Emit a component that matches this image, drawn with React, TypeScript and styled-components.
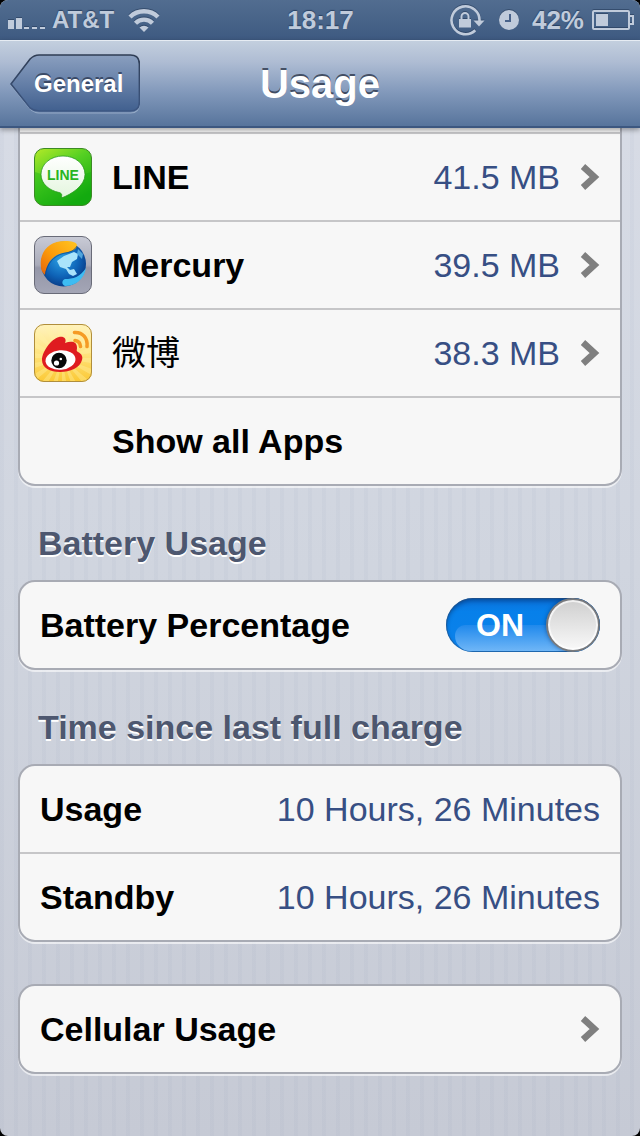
import React, { useState } from "react";
import styled, { createGlobalStyle } from "styled-components";

const GlobalStyle = createGlobalStyle`
  *, *::before, *::after { box-sizing: border-box; }
  body {
    margin: 0;
    background: #000;
    font-family: "Liberation Sans", "Noto Sans CJK SC", sans-serif;
  }
`;

const Screen = styled.div`
  display: flex;
  flex-direction: column;
  min-height: 100vh;
  border-radius: 8px;
  overflow: hidden;
  background:
    repeating-linear-gradient(90deg, rgba(90, 110, 150, 0.04) 0 4px, transparent 4px 14px),
    linear-gradient(#d9dde7, #d0d5df 50%, #c6cad5);
`;

const StatusBar = styled.header`
  display: grid;
  grid-template-columns: 1fr auto 1fr;
  align-items: center;
  height: 40px;
  padding: 0 6px 0 7px;
  background: linear-gradient(#526d90, #3e5a81);
  color: #c0cbdb;
  font-size: 26px;
  line-height: 40px;
  font-weight: bold;
  text-shadow: 0 -1px 1px rgba(20, 40, 70, 0.6);
`;

const StatusSide = styled.div<{ $end?: boolean }>`
  display: flex;
  align-items: center;
  justify-content: ${(p) => (p.$end ? "flex-end" : "flex-start")};
`;

const Percent = styled.span`
  margin: 0 8px 0 13px;
`;

const Carrier = styled.span`
  margin: 0 14px 0 7px;
  font-size: 24px;
`;

const StatusIcon = styled.svg`
  display: block;
  flex: none;
  fill: #c0cbdb;
  filter: drop-shadow(0 -1px 0 rgba(30, 50, 80, 0.5));
`;

const LockIcon = styled(StatusIcon)`
  margin-right: 14px;
`;

const NavBar = styled.nav`
  position: relative;
  display: grid;
  grid-template-columns: 1fr auto 1fr;
  align-items: center;
  height: 88px;
  padding: 0 10px;
  border-top: 1px solid #e6ecf3;
  border-bottom: 2px solid #3c5780;
  background: linear-gradient(#c3cfde, #aebcd3 25%, #8299bb 60%, #57749c);
  box-shadow: 0 2px 5px rgba(0, 0, 0, 0.35);
`;

const BackButton = styled.button`
  position: relative;
  justify-self: start;
  height: 60px;
  padding: 0 17px 0 24px;
  border: 0;
  background: none;
  color: #fff;
  font: bold 24px/56px "Liberation Sans", sans-serif;
  text-shadow: 0 -2px 0 rgba(45, 58, 84, 0.8);
  cursor: pointer;
`;

const BackShape = styled.svg`
  position: absolute;
  inset: 0;
  width: 100%;
  height: 100%;
`;

const BackLabel = styled.span`
  position: relative;
`;

const Title = styled.h1`
  margin: 0;
  color: #fff;
  font-size: 40px;
  line-height: 84px;
  text-shadow: 0 -2px 0 rgba(52, 62, 82, 0.85);
`;

const Content = styled.main`
  padding: 0 18px 62px;
`;

const Group = styled.ul<{ $cut?: boolean; $gap?: boolean }>`
  margin: ${(p) => (p.$gap ? "42px" : "0")} 0 0;
  padding: ${(p) => (p.$cut ? "4px" : "0")} 0 0;
  list-style: none;
  overflow: hidden;
  border: 2px solid #a8abb4;
  border-top-width: ${(p) => (p.$cut ? "0" : "2px")};
  border-radius: ${(p) => (p.$cut ? "0 0 17px 17px" : "17px")};
  background: #f7f7f7;
  box-shadow: 0 2px 0 rgba(255, 255, 255, 0.6);
`;

const Row = styled.li<{ $ruled?: boolean }>`
  border-top: ${(p) => (p.$ruled ? "2px solid #c6c6c8" : "0")};
`;

const rowLayout = `
  display: flex;
  align-items: center;
  height: 86px;
  padding: 0 20px;
  color: #000;
  font-size: 34px;
  line-height: 40px;
  text-decoration: none;
`;

const RowLine = styled.div`
  ${rowLayout}
`;

const RowLabel = styled.label`
  ${rowLayout}
  cursor: pointer;
`;

const RowLink = styled.a<{ $app?: boolean }>`
  ${rowLayout}
  padding-left: ${(p) => (p.$app ? "14px" : "20px")};
`;

const IconSlot = styled.span`
  flex: none;
  width: 78px;
  height: 58px;
`;

const Name = styled.span`
  flex: 1;
  font-weight: bold;
`;

const HanName = styled.span`
  flex: 1;
  font-weight: 400;
`;

const Value = styled.span`
  color: #374f84;
`;

const Chevron = styled.svg`
  display: block;
  flex: none;
  margin-left: 20px;
`;

const SectionTitle = styled.h2`
  margin: 0;
  padding: 37px 20px 17px;
  color: #4d576f;
  font-size: 34px;
  line-height: 40px;
  text-shadow: 0 2px 0 #fff;
`;

const Toggle = styled.span<{ $on: boolean }>`
  position: relative;
  display: flex;
  align-items: center;
  justify-content: ${(p) => (p.$on ? "flex-start" : "flex-end")};
  width: 154px;
  height: 54px;
  padding: 0 ${(p) => (p.$on ? "30px" : "22px")};
  overflow: hidden;
  border-radius: 27px;
  background: ${(p) => (p.$on ? "linear-gradient(#0a6fd8, #0780ea 25%, #0c82ea)" : "#eee")};
  box-shadow: inset 0 0 0 1px rgba(50, 80, 120, 0.5), inset 0 3px 4px rgba(0, 30, 80, 0.45);
  color: ${(p) => (p.$on ? "#fff" : "#7f7f7f")};
  font-size: 32px;
  font-weight: bold;

  &::before {
    content: "";
    position: absolute;
    left: 9px;
    right: 9px;
    bottom: 1px;
    height: 26px;
    border-radius: 18px 18px 26px 26px;
    background: ${(p) => (p.$on ? "linear-gradient(#2089ec, #6fb6f7)" : "#fafafa")};
  }
`;

const ToggleText = styled.span`
  position: relative;
`;

const Knob = styled.span<{ $on: boolean }>`
  position: absolute;
  top: 0;
  ${(p) => (p.$on ? "right: 0;" : "left: 0;")}
  width: 54px;
  height: 54px;
  border: 2px solid #77797d;
  border-radius: 50%;
  background: linear-gradient(#cfcfcf, #f9f9f9);
  box-shadow: inset 0 0 0 2px rgba(255, 255, 255, 0.7), 0 0 4px rgba(0, 30, 80, 0.5);
`;

const HiddenCheckbox = styled.input`
  position: absolute;
  inset: 0;
  width: 100%;
  height: 100%;
  margin: 0;
  opacity: 0;
  cursor: pointer;
`;

const SignalIcon = () => (
  <StatusIcon width="38" height="30" viewBox="0 0 38 30" aria-hidden="true">
    <path d="M1 15h6v9H1zM9 13h6v11H9zM17 22h5v2h-5zM25 22h5v2h-5zM33 22h5v2h-5z" />
  </StatusIcon>
);

const WifiIcon = () => (
  <StatusIcon width="32" height="26" viewBox="0 0 32 26" aria-hidden="true">
    <path d="M16 25l-4.500-4.500a6.400 6.400 0 0 1 9 0z" />
    <g fill="none" stroke="#c0cbdb" strokeWidth="4.400">
      <path d="M7.500 16.200a12 12 0 0 1 17 0" />
      <path d="M2 10a20 20 0 0 1 28 0" />
    </g>
  </StatusIcon>
);

const RotationLockIcon = () => (
  <LockIcon width="36" height="32" viewBox="0 0 36 32" aria-hidden="true">
    <path d="M26.300 26.300A14 14 0 1 1 30.500 17" fill="none" stroke="#c0cbdb" strokeWidth="2.600" />
    <path d="M24.500 16.500h11l-5.500 6z" />
    <path d="M10 15h12v8.500H10z" />
    <path d="M12.500 15v-2.500a3.500 3.500 0 0 1 7 0V15" fill="none" stroke="#c0cbdb" strokeWidth="2" />
  </LockIcon>
);

const ClockIcon = () => (
  <StatusIcon width="20" height="20" viewBox="0 0 20 20" aria-hidden="true">
    <circle cx="10" cy="10" r="10" />
    <path d="M11 4v7H6" fill="none" stroke="#48628a" strokeWidth="2" />
  </StatusIcon>
);

const BatteryIcon = () => (
  <StatusIcon width="42" height="22" viewBox="0 0 42 22" aria-hidden="true">
    <rect x="1" y="2" width="36" height="18" rx="1" fill="none" stroke="#c0cbdb" strokeWidth="2" />
    <path d="M4 5h12v12H4z" />
    <path d="M38 7h3v8h-3" fill="none" stroke="#c0cbdb" strokeWidth="2" />
  </StatusIcon>
);

const ChevronIcon = () => (
  <Chevron width="20" height="28" viewBox="0 0 20 28" aria-hidden="true">
    <path d="M3 3.500L14.500 14L3 24.500" fill="none" stroke="#7f7f7f" strokeWidth="6.500" />
  </Chevron>
);

const LineIcon = () => (
  <svg width="58" height="58" viewBox="0 0 58 58" aria-hidden="true">
    <defs>
      <linearGradient id="lineBg" x1="0" y1="0" x2="0.600" y2="1">
        <stop offset="0" stopColor="#b5ea28" />
        <stop offset="0.450" stopColor="#55d023" />
        <stop offset="1" stopColor="#16a80e" />
      </linearGradient>
      <linearGradient id="lineBubble" x1="0" y1="0" x2="0" y2="1">
        <stop offset="0" stopColor="#fff" />
        <stop offset="1" stopColor="#e3f5dd" />
      </linearGradient>
    </defs>
    <rect x="0.500" y="0.500" width="57" height="57" rx="9.500" fill="url(#lineBg)" stroke="#3c8a25" />
    <path d="M1 24Q29 34 57 24V48a9 9 0 0 1-9 9H10a9 9 0 0 1-9-9z" fill="#0db010" opacity="0.350" />
    <path d="M29 8C16.500 8 7 16 7 26.500C7 36 15.500 42.500 25 44.500C28 45.300 28 46.500 27.400 50C37 46.500 51 38 51 26.500C51 16 41.500 8 29 8z" fill="url(#lineBubble)" stroke="#24991a" strokeWidth="0.800" />
    <text x="29" y="32" textAnchor="middle" fontFamily="Liberation Sans, sans-serif" fontWeight="bold" fontSize="14" fill="#28b522">LINE</text>
  </svg>
);

const MercuryIcon = () => (
  <svg width="58" height="58" viewBox="0 0 58 58" aria-hidden="true">
    <defs>
      <linearGradient id="mercBg" x1="0" y1="0" x2="0" y2="1">
        <stop offset="0" stopColor="#c9cbd6" />
        <stop offset="0.500" stopColor="#a9abb9" />
        <stop offset="0.550" stopColor="#9597a8" />
        <stop offset="1" stopColor="#a4a6b6" />
      </linearGradient>
      <radialGradient id="mercGlobe" cx="0.450" cy="0.400" r="0.650">
        <stop offset="0" stopColor="#2ba0e4" />
        <stop offset="0.600" stopColor="#0e62b6" />
        <stop offset="1" stopColor="#07357f" />
      </radialGradient>
      <linearGradient id="mercSwoosh" x1="1" y1="0" x2="0" y2="1">
        <stop offset="0" stopColor="#ffc522" />
        <stop offset="0.550" stopColor="#fb9a0a" />
        <stop offset="1" stopColor="#e5640b" />
      </linearGradient>
    </defs>
    <rect x="0.500" y="0.500" width="57" height="57" rx="9.500" fill="url(#mercBg)" stroke="#696b78" />
    <circle cx="29.500" cy="28" r="22.500" fill="url(#mercGlobe)" />
    <path d="M23 25L30 20L40 16L44 18L43 23L38 26L36 31L33 31L36 34L40 33L43 38L39 40L35 38L32 33L26 31z" fill="#a9e3fb" />
    <path d="M44 13l5 5-1 5-5-5z" fill="#4fa4dc" />
    <path d="M31 43C39 43 46 41 52 32C50 43 42 50 31 50C27 48 28 44 31 43z" fill="#3ebcf2" />
    <path d="M7 31C5 16 15 5 31 5C38 5 42 6 43 9C43 14 37 16 29 17C19 19 13 26 11 39C8 36 7 34 7 31z" fill="url(#mercSwoosh)" />
    <path d="M11 39.500C13 27 20 20 29 17.500Q40 16 43 10" fill="none" stroke="#093d81" strokeWidth="1" opacity="0.600" />
  </svg>
);

const rays = Array.from({ length: 18 }, (_, i) => {
  const a = (i * Math.PI) / 9;
  const b = a + Math.PI / 18;
  return `M28 34L${28 + 60 * Math.cos(a)} ${34 + 60 * Math.sin(a)}L${28 + 60 * Math.cos(b)} ${34 + 60 * Math.sin(b)}z`;
}).join("");

const WeiboIcon = () => (
  <svg width="58" height="58" viewBox="0 0 58 58" aria-hidden="true">
    <defs>
      <linearGradient id="weiboBg" x1="0" y1="0" x2="0" y2="1">
        <stop offset="0" stopColor="#fff3c0" />
        <stop offset="0.500" stopColor="#ffe480" />
        <stop offset="1" stopColor="#fbc833" />
      </linearGradient>
      <clipPath id="weiboClip">
        <rect width="58" height="58" rx="10" />
      </clipPath>
    </defs>
    <g clipPath="url(#weiboClip)">
      <rect width="58" height="58" fill="url(#weiboBg)" />
      <path d={rays} fill="#fff3a8" opacity="0.350" />
    </g>
    <rect x="0.500" y="0.500" width="57" height="57" rx="9.500" fill="none" stroke="#b08e3c" />
    <path d="M8 36C8 28 17 15 25 13C30 12 33 15 31 19C37 17 43 17 43 24C43 26 42 27 44 28C48 30 49 33 48 36C46 44 36 48 26 48C16 48 8 44 8 36z" fill="#df1c20" />
    <ellipse cx="26.500" cy="36" rx="15" ry="9.800" fill="#fff" transform="rotate(-5 26.500 36)" />
    <circle cx="25" cy="36.500" r="7.700" fill="#080808" />
    <circle cx="22.500" cy="39" r="2.600" fill="#fff" />
    <circle cx="26.800" cy="35" r="1.300" fill="#fff" />
    <g fill="none" stroke="#f59b24" strokeWidth="3.600" strokeLinecap="round">
      <path d="M41 16.500Q46 17 46.500 22.500" />
      <path d="M40.500 8.500C48.500 8 54 14 53 22.500" />
    </g>
  </svg>
);

const apps = [
  { name: "LINE", size: "41.5 MB", Icon: LineIcon },
  { name: "Mercury", size: "39.5 MB", Icon: MercuryIcon },
  { name: "微博", size: "38.3 MB", Icon: WeiboIcon, han: true },
];

const times = [
  { label: "Usage", value: "10 Hours, 26 Minutes" },
  { label: "Standby", value: "10 Hours, 26 Minutes" },
];

export default function App() {
  const [percentage, setPercentage] = useState(true);

  return (
    <>
      <GlobalStyle />
      <Screen>
        <StatusBar>
          <StatusSide>
            <SignalIcon />
            <Carrier>AT&amp;T</Carrier>
            <WifiIcon />
          </StatusSide>
          <span>18:17</span>
          <StatusSide $end>
            <RotationLockIcon />
            <ClockIcon />
            <Percent>42%</Percent>
            <BatteryIcon />
          </StatusSide>
        </StatusBar>
        <NavBar>
          <BackButton type="button">
            <BackShape viewBox="0 0 130 60" preserveAspectRatio="none" aria-hidden="true">
              <defs>
                <linearGradient id="backFill" x1="0" y1="0" x2="0" y2="1">
                  <stop offset="0" stopColor="#8a9fbf" />
                  <stop offset="0.500" stopColor="#6680a8" />
                  <stop offset="1" stopColor="#41608f" />
                </linearGradient>
                <linearGradient id="backEdge" x1="0" y1="0" x2="0" y2="1">
                  <stop offset="0" stopColor="#2f3d54" />
                  <stop offset="1" stopColor="#3d5783" />
                </linearGradient>
              </defs>
              <path d="M1 31L20 6Q24 3 29 3H120Q129 3 129 12V50Q129 59 120 59H29Q24 59 20 55z" fill="none" stroke="#b6c6dc" strokeOpacity="0.600" />
              <path d="M1 30L20 5Q24 1 29 1H120Q129 1 129 10V48Q129 57 120 57H29Q24 57 20 54z" fill="url(#backFill)" stroke="url(#backEdge)" strokeWidth="1.600" />
            </BackShape>
            <BackLabel>General</BackLabel>
          </BackButton>
          <Title>Usage</Title>
        </NavBar>
        <Content>
          <Group $cut>
            {apps.map(({ name, size, Icon, han }) => (
              <Row key={name} $ruled>
                <RowLink href="#" $app>
                  <IconSlot>
                    <Icon />
                  </IconSlot>
                  {han ? <HanName lang="zh-Hans">{name}</HanName> : <Name>{name}</Name>}
                  <Value>{size}</Value>
                  <ChevronIcon />
                </RowLink>
              </Row>
            ))}
            <Row $ruled>
              <RowLink href="#" $app>
                <IconSlot />
                <Name>Show all Apps</Name>
              </RowLink>
            </Row>
          </Group>

          <SectionTitle>Battery Usage</SectionTitle>
          <Group>
            <Row>
              <RowLabel htmlFor="battery-percentage">
                <Name>Battery Percentage</Name>
                <Toggle $on={percentage}>
                  <ToggleText>{percentage ? "ON" : "OFF"}</ToggleText>
                  <Knob $on={percentage} />
                  <HiddenCheckbox
                    id="battery-percentage"
                    type="checkbox"
                    checked={percentage}
                    onChange={(e) => setPercentage(e.target.checked)}
                  />
                </Toggle>
              </RowLabel>
            </Row>
          </Group>

          <SectionTitle>Time since last full charge</SectionTitle>
          <Group>
            {times.map(({ label, value }, i) => (
              <Row key={label} $ruled={i > 0}>
                <RowLine>
                  <Name>{label}</Name>
                  <Value>{value}</Value>
                </RowLine>
              </Row>
            ))}
          </Group>

          <Group $gap>
            <Row>
              <RowLink href="#">
                <Name>Cellular Usage</Name>
                <ChevronIcon />
              </RowLink>
            </Row>
          </Group>
        </Content>
      </Screen>
    </>
  );
}
